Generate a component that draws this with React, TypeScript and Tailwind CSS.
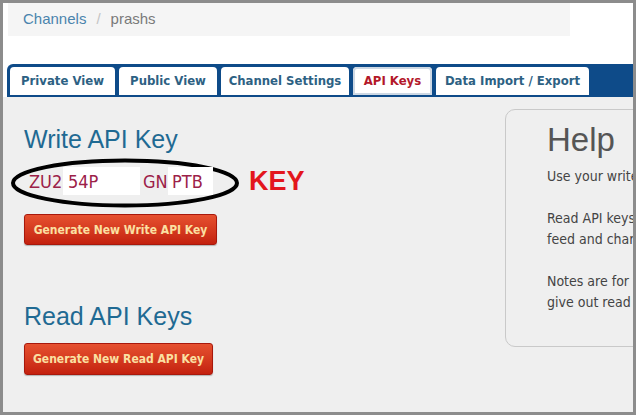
const TABS = [
  { label: 'Private View', width: 'w-[105px]' },
  { label: 'Public View', width: 'w-[98px]' },
  { label: 'Channel Settings', width: 'w-[128px]' },
  { label: 'API Keys', width: 'w-[79px]', active: true },
  { label: 'Data Import / Export', width: 'w-[153px]' },
]

const HELP_LINES = [
  ['Use your write API key to update a channel.'],
  ['Read API keys enable you to allow others to view your', 'feed and charts.'],
  ['Notes are for you to keep track of who you', 'give out read keys to.'],
]

const tahoma = "font-['DejaVu_Sans_Condensed','DejaVu_Sans',sans-serif]"

function RedButton({ label, width, height }: { label: string; width: string; height: string }) {
  return (
    <button
      className={`${width} ${height} rounded-[3px] border border-[#a8180c] bg-gradient-to-b from-[#e6502f] to-[#c4200e] text-[12px] font-bold text-[#fbe0a2] shadow-[0_1px_1px_rgba(0,0,0,0.25)] ${tahoma}`}
    >
      {label}
    </button>
  )
}

export default function App() {
  return (
    <div className="h-[415px] w-[636px] overflow-hidden bg-[#8c8c8c] p-[3px]">
      <div className="flex h-full flex-col overflow-hidden bg-white">
        {/* breadcrumb */}
        <div className="ml-[5px] flex h-[33px] w-[562px] items-center gap-[10px] bg-[#f5f5f5] pl-[15px] font-['Liberation_Sans',sans-serif] text-[15px]">
          <span className="text-[#4a84ad]">Channels</span>
          <span className="text-[#c4c4c4]">/</span>
          <span className="text-[#7a7a7a]">prashs</span>
        </div>

        {/* tabs */}
        <div className="ml-[4px] mt-[28px] flex h-[33px] gap-[4px] rounded-tl-[6px] bg-[#0e4b89] px-[3px] pt-[3px] pb-[2px]">
          {TABS.map((tab) => (
            <div
              key={tab.label}
              className={`${tab.width} flex items-center justify-center rounded-t-[4px] bg-white text-[13px] font-bold ${tahoma} ${
                tab.active ? 'text-[#b3182a] ring-2 ring-inset ring-[#cdd8e4]' : 'text-[#2d6183]'
              }`}
            >
              {tab.label}
            </div>
          ))}
        </div>

        {/* content */}
        <div className="flex flex-1 bg-[#efefef]">
          <div className="w-[502px] shrink-0 pl-[21px]">
            <h2 className="mt-[28px] font-['Liberation_Sans',sans-serif] text-[25px] leading-[28px] text-[#1f6a93]">
              Write API Key
            </h2>

            <div className="relative flex h-[52px] items-center pt-[4px]">
              <svg
                className="absolute left-[-14px] top-[5px]"
                width="230"
                height="50"
                viewBox="0 0 230 50"
              >
                <ellipse cx="115" cy="25" rx="112" ry="22.5" fill="none" stroke="#000" strokeWidth="4" />
              </svg>
              <div className={`relative ml-[5px] flex h-[28px] items-center text-[18px] text-[#9c2148] ${tahoma}`}>
                <span className="w-[34px]">ZU2</span>
                <span className="flex h-full w-[77px] items-center bg-white pl-[5px]">54P</span>
                <span className="w-[28px] pl-[3px]">GN</span>
                <span className="flex h-full w-[45px] items-center bg-white pl-[4px]">PTB</span>
              </div>
              <span className="relative ml-[36px] font-['Liberation_Sans',sans-serif] text-[27px] font-bold leading-none text-[#e3161c]">
                KEY
              </span>
            </div>

            <div className="mt-[9px]">
              <RedButton label="Generate New Write API Key" width="w-[193px]" height="h-[31px]" />
            </div>

            <h2 className="mt-[57px] font-['Liberation_Sans',sans-serif] text-[25px] leading-[28px] text-[#1f6a93]">
              Read API Keys
            </h2>

            <div className="mt-[13px]">
              <RedButton label="Generate New Read API Key" width="w-[189px]" height="h-[32px]" />
            </div>
          </div>

          <div className="mt-[12px] h-[238px] w-[200px] shrink-0 overflow-hidden rounded-[10px] border border-[#c9c9c9] pl-[41px]">
            <h3 className="mt-[12px] font-['Liberation_Sans',sans-serif] text-[33px] leading-[36px] text-[#555]">
              Help
            </h3>
            <div className={`mt-[8px] flex flex-col gap-[21px] text-[14px] leading-[21px] text-[#444] ${tahoma}`}>
              {HELP_LINES.map((para, i) => (
                <p key={i} className="whitespace-nowrap">
                  {para.map((line) => (
                    <span key={line} className="block">
                      {line}
                    </span>
                  ))}
                </p>
              ))}
            </div>
          </div>
        </div>
      </div>
    </div>
  )
}
